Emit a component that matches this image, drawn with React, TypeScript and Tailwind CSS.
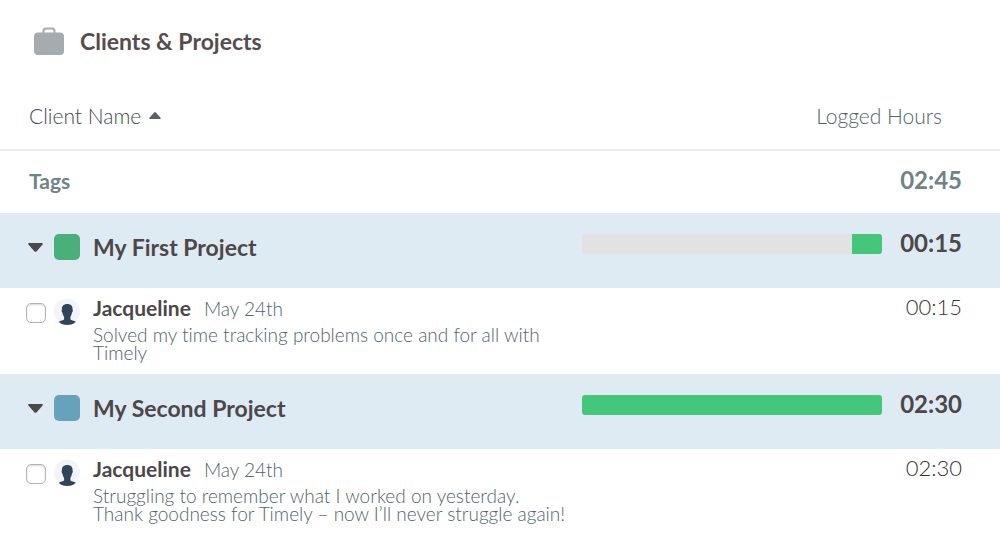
import { Fragment, useState } from "react";

type Entry = {
  id: number;
  user: string;
  date: string;
  note: string;
  hours: string;
};

type Project = {
  id: number;
  name: string;
  swatch: string;
  logged: number;
  hours: string;
  entries: Entry[];
};

const projects: Project[] = [
  {
    id: 1,
    name: "My First Project",
    swatch: "bg-[#49b07c]",
    logged: 10,
    hours: "00:15",
    entries: [
      {
        id: 11,
        user: "Jacqueline",
        date: "May 24th",
        note: "Solved my time tracking problems once and for all with\nTimely",
        hours: "00:15",
      },
    ],
  },
  {
    id: 2,
    name: "My Second Project",
    swatch: "bg-[#67a2bd]",
    logged: 100,
    hours: "02:30",
    entries: [
      {
        id: 21,
        user: "Jacqueline",
        date: "May 24th",
        note: "Struggling to remember what I worked on yesterday.\nThank goodness for Timely – now I’ll never struggle again!",
        hours: "02:30",
      },
    ],
  },
];

function BriefcaseIcon() {
  return (
    <svg width="30" height="28" viewBox="0 0 30 28" aria-hidden="true">
      <path
        d="M9.500 7.500V4A2.500 2.500 0 0 1 12 1.500h6A2.500 2.500 0 0 1 20.500 4v3.500"
        fill="none"
        stroke="#a6abaf"
        strokeWidth="2"
      />
      <rect y="5.5" width="30" height="22.5" rx="4" fill="#a6abaf" />
    </svg>
  );
}

function Avatar() {
  return (
    <svg width="26" height="28" viewBox="0 0 26 28" className="shrink-0" aria-hidden="true">
      <circle cx="13" cy="13.5" r="13" fill="#f1f4f9" />
      <path
        d="M13.300 6c3.600 0 5.600 2.100 5.300 5.700.5.500.2 2.200-.6 2.800-.3 1.900-.9 3.300-1.600 4.200v2.600c.6 1 3.700 1.200 5.400 2.500-2.100 2.200-5 3.300-8.600 3.300s-6.400-1.100-8.500-3.300c1.700-1.300 4.900-1.500 5.400-2.500v-2.600c-.8-.9-1.400-2.300-1.700-4.200-.8-.6-1-2.300-.5-2.800C7.600 8.100 9.700 6 13.300 6z"
        fill="#31455a"
      />
    </svg>
  );
}

function Caret({ open }: { open: boolean }) {
  return (
    <svg
      width="15"
      height="9"
      viewBox="0 0 15 9"
      className={open ? "" : "-rotate-90"}
      aria-hidden="true"
    >
      <path d="M1 0h13c.9 0 1.200.9.6 1.500L8.700 8.200c-.7.7-1.700.7-2.400 0L.4 1.500C-.2.9.1 0 1 0z" fill="#4c4749" />
    </svg>
  );
}

export default function App() {
  const [closed, setClosed] = useState<number[]>([]);

  function toggle(id: number) {
    setClosed((ids) => (ids.includes(id) ? ids.filter((i) => i !== id) : [...ids, id]));
  }

  return (
    <main className="bg-white font-[Lato,'Open_Sans',sans-serif] text-[#4c4749] [font-variant-ligatures:none]">
      <header className="flex items-center gap-4 px-[34px] py-[25px]">
        <BriefcaseIcon />
        <h1 className="text-[23px] leading-8 font-bold text-[#554d4d]">Clients &amp; Projects</h1>
      </header>

      <table className="w-full table-fixed border-collapse">
        <colgroup>
          <col />
          <col className="w-[30%]" />
          <col className="w-[118px]" />
        </colgroup>
        <thead>
          <tr className="h-[68px] border-b-2 border-[#ebebeb] text-[21px]">
            <th className="pl-[29px] text-left font-light text-[#3f4a4e]">
              <button type="button" className="flex items-center gap-2">
                Client Name
                <svg width="12" height="7" viewBox="0 0 12 7" aria-hidden="true">
                  <path d="M5.200.5c.5-.5 1.100-.5 1.600 0l4.800 5.200c.5.6.2 1.300-.6 1.300H1C.2 7-.1 6.300.4 5.700z" fill="#566368" />
                </svg>
              </button>
            </th>
            <th colSpan={2} className="pr-[58px] text-right font-light text-[#4f646a]">
              Logged Hours
            </th>
          </tr>
        </thead>
        <tbody>
          <tr className="h-[63px] text-[#6f8388]">
            <td className="pb-[3px] pl-[29px] text-[21px] font-bold">Tags</td>
            <td colSpan={2} className="pr-[38px] pb-1 text-right text-2xl font-bold">
              02:45
            </td>
          </tr>
          {projects.map((project) => {
            const open = !closed.includes(project.id);
            return (
              <Fragment key={project.id}>
                <tr className="h-[75px] bg-[#dfebf3] align-top">
                  <td className="pt-[18px] pl-[28px]">
                    <div className="flex h-8 items-center">
                      <button
                        type="button"
                        aria-expanded={open}
                        aria-label={`Toggle ${project.name}`}
                        onClick={() => toggle(project.id)}
                      >
                        <Caret open={open} />
                      </button>
                      <span className={`ml-[11px] size-[26px] rounded-[5px] ${project.swatch}`} />
                      <span className="ml-[13px] text-[23px] font-bold">{project.name}</span>
                    </div>
                  </td>
                  <td className="pt-[21px]">
                    <div className="flex h-5 justify-end overflow-hidden rounded-[3px] bg-[#e2e2e2]">
                      <div className="bg-[#44c67b]" style={{ width: `${project.logged}%` }} />
                    </div>
                  </td>
                  <td className="pt-[14px] pr-[38px] text-right text-2xl font-bold">{project.hours}</td>
                </tr>
                {open &&
                  project.entries.map((entry) => (
                    <tr key={entry.id} className="h-[86px] align-top">
                      <td className="pt-2 pl-[26px]">
                        <div className="flex">
                          <input
                            type="checkbox"
                            aria-label={`Select entry by ${entry.user}`}
                            className="mt-[7px] mr-2 size-5 shrink-0 appearance-none rounded-[5px] border border-[#b4b4b4] bg-white shadow-[inset_0_1px_2px_#d8d8d8] checked:bg-[#44c67b]"
                          />
                          <div className="pt-[2px]">
                            <Avatar />
                          </div>
                          <div className="ml-[13px]">
                            <div className="flex items-baseline gap-[13px]">
                              <span className="text-[21px] leading-6 font-bold">{entry.user}</span>
                              <span className="text-[19px] leading-6 font-light text-[#4f646a]">{entry.date}</span>
                            </div>
                            <p className="mt-[5px] text-[19px] leading-[18px] font-light whitespace-pre-line text-[#4f646a]">
                              {entry.note}
                            </p>
                          </div>
                        </div>
                      </td>
                      <td />
                      <td className="pt-[2px] pr-[38px] text-right text-[22px] font-light text-[#3a3537]">
                        {entry.hours}
                      </td>
                    </tr>
                  ))}
              </Fragment>
            );
          })}
        </tbody>
      </table>
    </main>
  );
}
